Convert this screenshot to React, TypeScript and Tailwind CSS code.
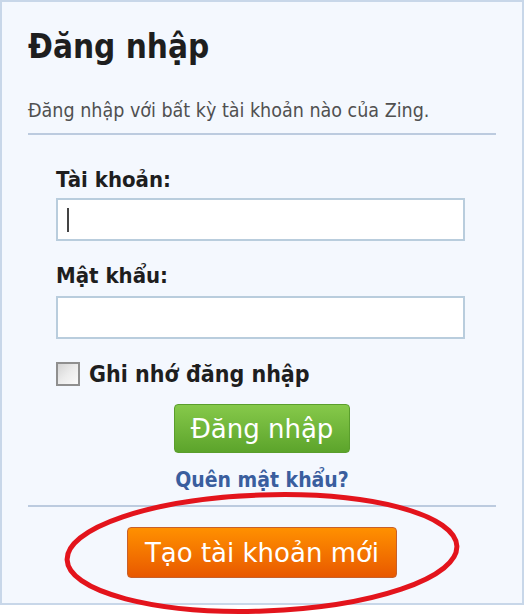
import React from 'react';

const cond = { fontFamily: '"DejaVu Sans Condensed", "DejaVu Sans", Tahoma, sans-serif' };
const wide = { fontFamily: '"DejaVu Sans", Tahoma, Verdana, sans-serif' };

export default function App() {
  return (
    <div className="w-[529px] h-[615px] bg-white relative" style={cond}>
      {/* Login panel */}
      <div className="w-[524px] h-[605px] border-2 border-[#c8d7e9] bg-[#f4f8fe] flex flex-col px-[26px]">
        <h1 className="mt-[25px] text-[33px] leading-[40px] font-bold text-[#1e1e1e]">Đăng nhập</h1>
        <p className="mt-[32px] text-[19.5px] leading-[24px] text-[#505050]">
          Đăng nhập với bất kỳ tài khoản nào của Zing.
        </p>
        <div className="mt-[10px] h-[2px] w-full bg-[#bccbdf]" />

        <div className="flex flex-col pl-[28px]">
          <label className="mt-[31px] text-[22px] leading-[28px] font-bold text-[#1e1e1e]">Tài khoản:</label>
          <div className="mt-[4px] h-[43px] w-[409px] border-2 border-[#b9cddd] bg-white flex items-center pl-[9px]">
            <span className="w-[2px] h-[24px] bg-[#444]" />
          </div>

          <label className="mt-[21px] text-[22px] leading-[28px] font-bold text-[#1e1e1e]">Mật khẩu:</label>
          <div className="mt-[6px] h-[43px] w-[409px] border-2 border-[#b9cddd] bg-white" />

          <div className="mt-[22px] flex items-center gap-[9px]">
            <span className="w-[24px] h-[24px] border-2 border-[#8f8f8f] bg-gradient-to-br from-[#d4d4d4] via-[#ececec] to-[#fafafa]" />
            <span className="text-[23px] leading-[26px] font-bold text-[#1e1e1e]">Ghi nhớ đăng nhập</span>
          </div>
        </div>

        <div className="mt-[17px] flex justify-center">
          <button
            className="w-[176px] h-[49px] rounded-[4px] border border-[#5a9e2c] bg-gradient-to-b from-[#86c94a] to-[#5ca42b] text-white text-[26px] leading-[30px]"
            style={wide}
          >
            Đăng nhập
          </button>
        </div>

        <div className="mt-[14px] flex justify-center">
          <a className="text-[21px] leading-[26px] font-bold text-[#3a5e9e]">Quên mật khẩu?</a>
        </div>

        <div className="mt-[12px] h-[2px] w-full bg-[#bccbdf]" />

        <div className="mt-[20px] flex justify-center">
          <button
            className="w-[270px] h-[51px] rounded-[4px] border border-[#c8602a] bg-gradient-to-b from-[#ff9000] to-[#e85800] text-white text-[26px] leading-[30px]"
            style={wide}
          >
            Tạo tài khoản mới
          </button>
        </div>
      </div>

      {/* Red hand-drawn highlight */}
      <svg className="absolute left-0 top-0 pointer-events-none" width="529" height="615" viewBox="0 0 529 615">
        <ellipse cx="262" cy="553" rx="195" ry="58" fill="none" stroke="#e3141c" strokeWidth="5" transform="rotate(-2 262 553)" />
      </svg>
    </div>
  );
}
